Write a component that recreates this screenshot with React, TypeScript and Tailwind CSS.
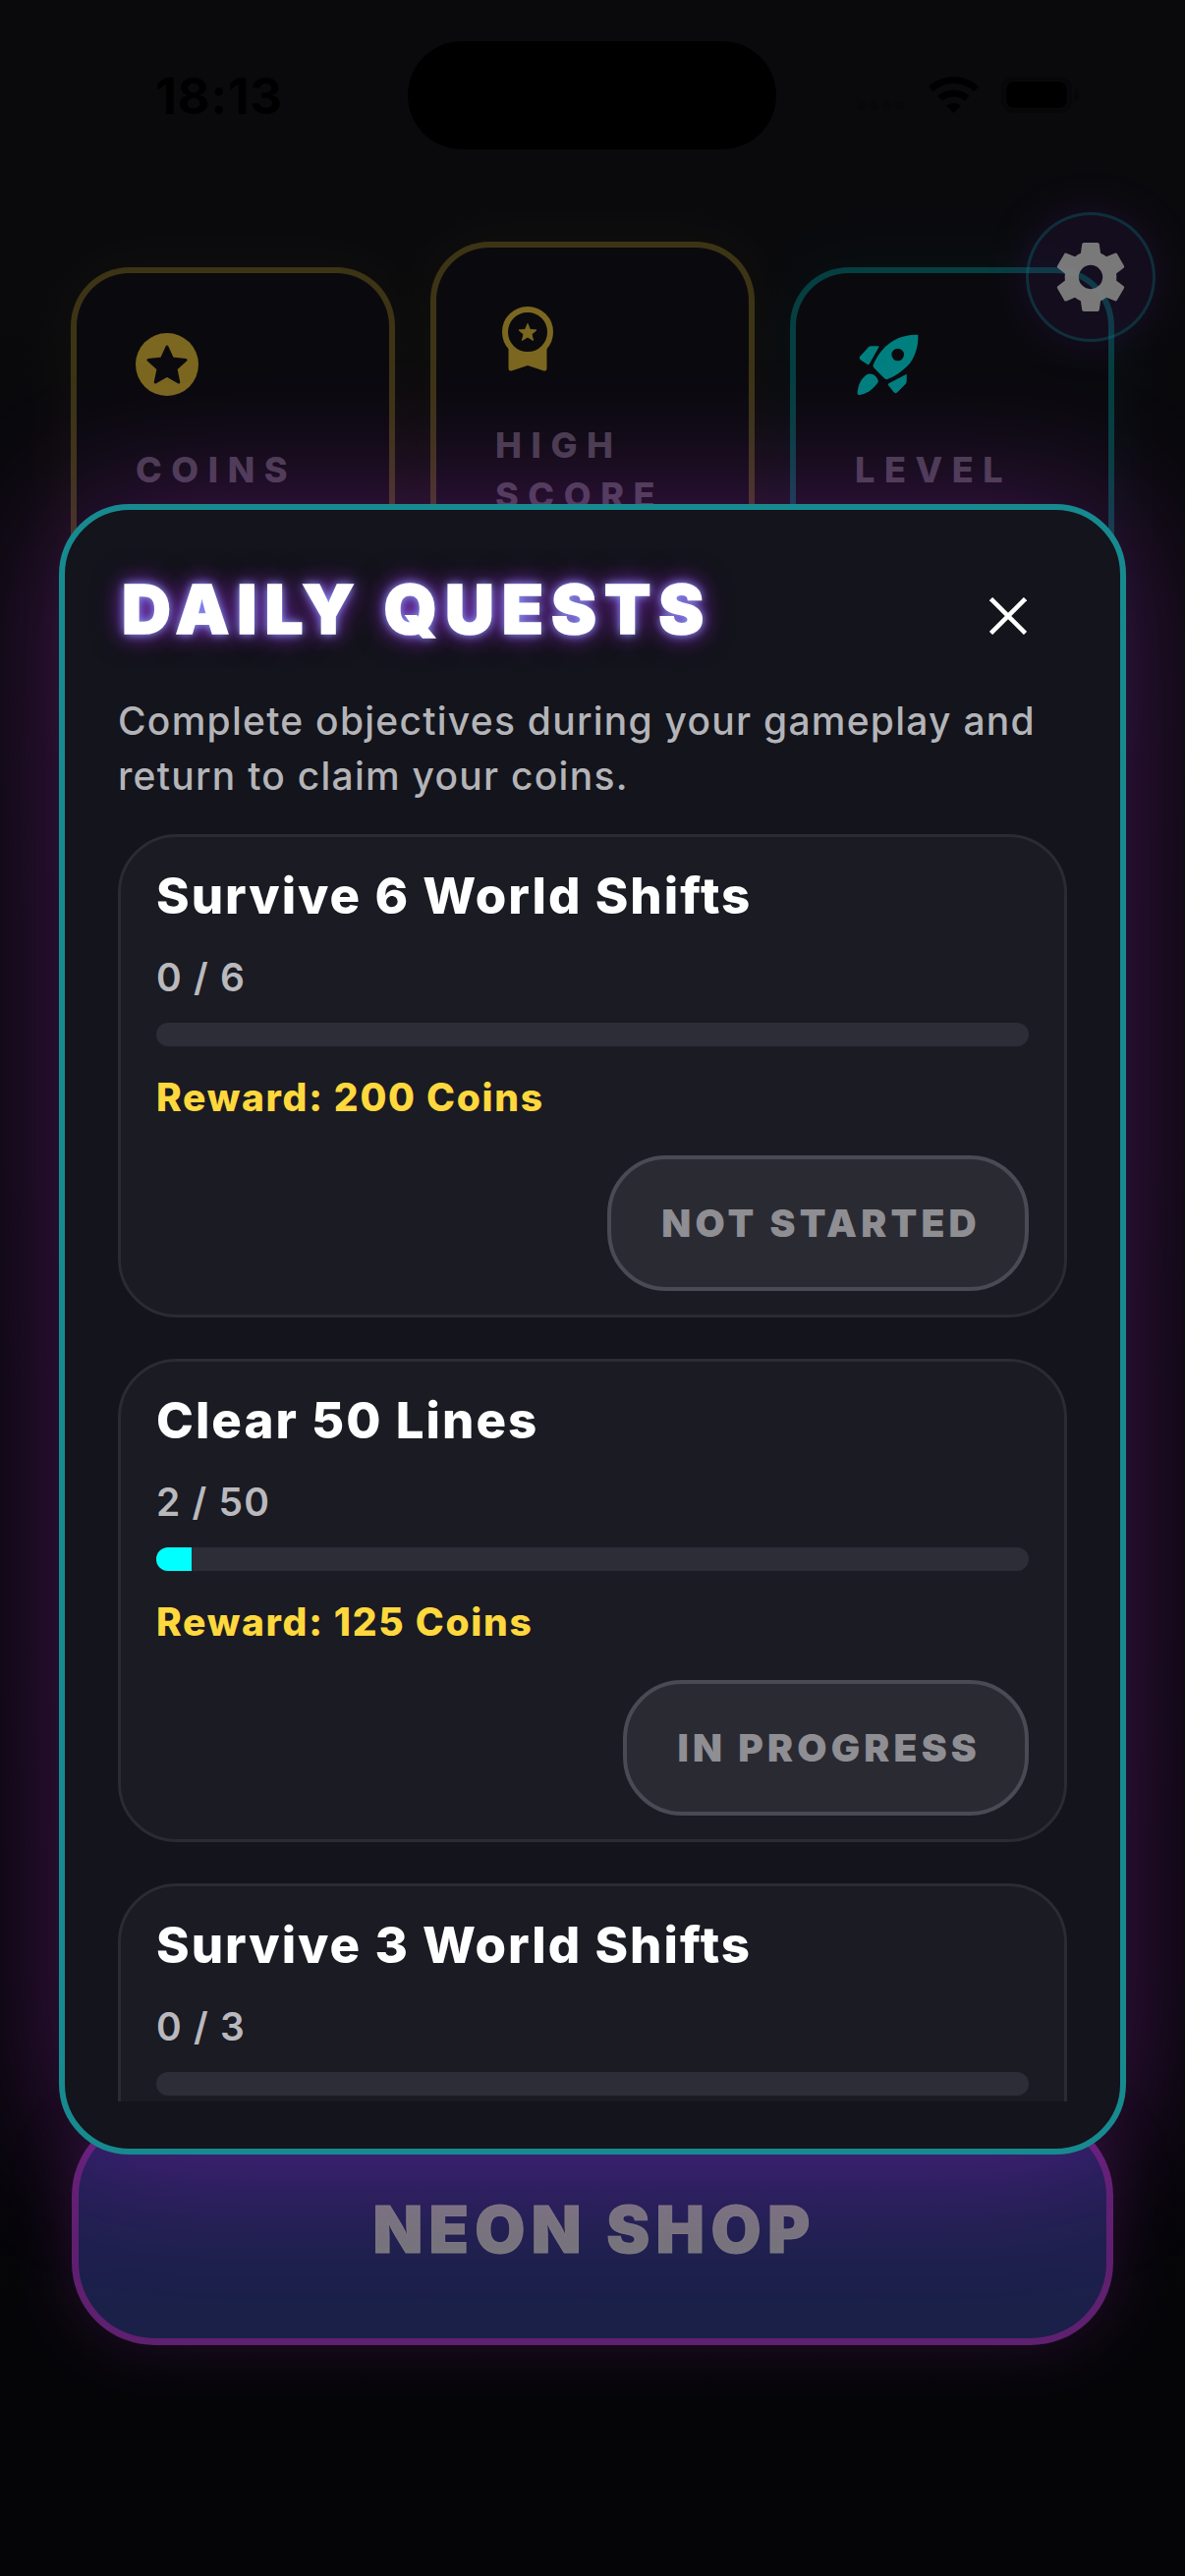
import { IoSettingsSharp } from 'react-icons/io5';

const sans = "font-['Inter','Noto_Sans',sans-serif]";

const quests = [
  { title: 'Survive 6 World Shifts', progress: '0 / 6', pct: 0, reward: 'Reward: 200 Coins', status: 'NOT STARTED' },
  { title: 'Clear 50 Lines', progress: '2 / 50', pct: 4, reward: 'Reward: 125 Coins', status: 'IN PROGRESS' },
  { title: 'Survive 3 World Shifts', progress: '0 / 3', pct: 0 },
];

const StatusBar = () => (
  <div className="flex items-start justify-between h-[152px] pt-[42px] pl-[158px] pr-[108px]">
    <span className="mt-[31px] text-[51px] leading-[50px] font-bold tracking-[0.500px] text-black">18:13</span>
    <div className="absolute left-[415px] top-[42px] w-[375px] h-[110px] rounded-[55px] bg-black" />
    <div className="flex items-center mt-[36px] gap-[23px]">
      <div className="flex gap-[4px] mt-[22px] mr-[2px]">
        <span className="w-[9px] h-[9px] rounded-full bg-[#101016]" />
        <span className="w-[9px] h-[9px] rounded-full bg-[#101016]" />
        <span className="w-[9px] h-[9px] rounded-full bg-[#101016]" />
        <span className="w-[9px] h-[9px] rounded-full bg-[#101016]" />
      </div>
      <svg width="51" height="37" viewBox="0 0 51 37" fill="black">
        <path d="M25.5 0C15.8 0 7 3.800 0 10l4.500 5.200C10.200 10.200 17.500 7 25.500 7s15.300 3.200 21 8.200L51 10C44 3.800 35.200 0 25.500 0z" />
        <path d="M25.500 13.500c-6.200 0-11.800 2.300-16.200 6.100l4.600 5.200c3.100-2.700 7.200-4.300 11.600-4.300s8.500 1.600 11.600 4.300l4.600-5.200c-4.400-3.800-10-6.100-16.200-6.100z" />
        <path d="M25.500 27c-2.900 0-5.500 1-7.500 2.800l7.500 7.200 7.500-7.200C31 28 28.400 27 25.500 27z" />
      </svg>
      <div className="flex items-center">
        <div className="w-[72px] h-[37px] rounded-[12px] border-[4px] border-[#0e0e12] p-[1px]">
          <div className="w-full h-full rounded-[8px] bg-black" />
        </div>
        <span className="w-[5px] h-[14px] rounded-r-full bg-[#0e0e12] ml-[2px]" />
      </div>
    </div>
  </div>
);

const StarCoin = () => (
  <svg width="64" height="64" viewBox="0 0 64 64">
    <circle cx="32" cy="32" r="32" fill="#f6ce3e" />
    <polygon
      points="32,14 37.500,26 51,27.500 41,36.500 43.800,50 32,43.200 20.200,50 23,36.500 13,27.500 26.500,26"
      fill="#14141c"
      stroke="#14141c"
      strokeWidth="3"
      strokeLinejoin="round"
    />
  </svg>
);

const Medal = () => (
  <svg width="52" height="66" viewBox="0 0 52 66" fill="#f6ce3e">
    <circle cx="26" cy="26" r="23" fill="none" stroke="#f6ce3e" strokeWidth="6" />
    <path d="M6.500 42V63Q6.500 66 9.500 65.500L26 60 42.500 65.500Q45.500 66 45.500 63V42A26 26 0 0 1 6.500 42Z" />
    <polygon
      points="26,17.500 28.500,23.500 35,24 30,28.200 31.600,34.500 26,31 20.400,34.500 22,28.200 17,24 23.500,23.500"
      stroke="#f6ce3e"
      strokeWidth="1"
      strokeLinejoin="round"
    />
  </svg>
);

const Rocket = () => (
  <svg width="65" height="66" viewBox="20 18 65 66" fill="#00ffff" fillRule="evenodd">
    <path d="M83.300 20.700C70 20 58 25 50 33 45 38 40 45 37.500 52 37.500 53 38 54 39 55L49 65C50 66 51 66.500 52 66 60 63 67 58 73 52 80 45 84 32 83.300 20.700ZM62.700 34.700A6.300 6.300 0 1 1 62.700 47.300 6.300 6.300 0 1 1 62.700 34.700Z" />
    <path d="M43.300 32.300H36Q34 32.300 33 33.300L24 43Q23 45 25 46.500L32 51Q33.500 51.500 34 50L43.300 33.500Z" />
    <path d="M71.700 60.700V68Q71.700 70 70.500 71L62 79.500Q60 81 58.500 79L53 72Q52.500 70.500 54 70Z" />
    <path d="M32 60.700Q38 60 41 64 44 68 42 70C36 78 30 81 24 82 21 82.500 21.700 79 21.700 79 22.500 72 25 65 32 60.700Z" />
  </svg>
);

const StatCard = ({ label, lines, border, glow, raised, children }: {
  label?: string;
  lines?: string[];
  border: string;
  glow: string;
  raised?: boolean;
  children: React.ReactNode;
}) => (
  <div className={`w-[330px] h-[520px] rounded-[60px] border-[6px] bg-[#14141c] flex flex-col items-start pl-[60px] ${border} ${glow} ${raised ? 'mt-0 pt-[60px]' : 'mt-[26px] pt-[61px]'}`}>
    <div className="h-[64px] flex items-center">{children}</div>
    <div className={`text-[36px] leading-[51px] font-extrabold tracking-[9.600px] text-[#8a7c96] ${raised ? 'mt-[52px]' : 'mt-[50px]'}`}>
      {lines ? lines.map((l) => <div key={l}>{l}</div>) : label}
    </div>
  </div>
);

type Quest = { title: string; progress: string; pct: number; reward?: string; status?: string };

const QuestCard = ({ title, progress, pct, reward, status }: Quest) => (
  <div className="shrink-0 h-[492px] rounded-[60px] border-[3px] border-[#2a2b33] bg-[#1a1b23] px-[36px] pt-[29px] flex flex-col">
    <h2 className="text-[51px] leading-[62px] font-extrabold tracking-[2px] text-white">{title}</h2>
    <p className="mt-[29px] text-[39px] leading-[46px] font-semibold tracking-[1.200px] text-[#b9b9bd]">{progress}</p>
    <div className="mt-[23px] shrink-0 h-[24px] rounded-[12px] bg-[#2c2d36] overflow-hidden">
      <div className="h-full bg-[#00ffff]" style={{ width: `${pct}%` }} />
    </div>
    {reward && <p className="mt-[29px] text-[39px] leading-[46px] font-extrabold tracking-[1.700px] text-[#ffd83d]">{reward}</p>}
    {status && (
      <div className="mt-[36px] flex justify-end">
        <div className="h-[138px] rounded-[60px] border-[4px] border-[#4a4a54] bg-[#2a2a33] pl-[51px] pr-[45px] flex items-center text-[39px] font-black tracking-[4.200px] text-[#8e8e93]">
          {status}
        </div>
      </div>
    )}
  </div>
);

const App = () => {
  return (
    <div className={`relative w-[1206px] h-[2622px] overflow-hidden bg-gradient-to-b from-[#15151b] to-[#0a0a10] ${sans}`}>
      {/* screen behind the modal */}
      <div className="flex flex-col h-full">
        <StatusBar />
        <div className="flex items-start gap-[36px] px-[72px] mt-[94px]">
          <StatCard label="COINS" border="border-[#f6ce3e]/45" glow="shadow-[0_0_60px_rgba(255,215,60,0.08)]">
            <StarCoin />
          </StatCard>
          <StatCard lines={['HIGH', 'SCORE']} border="border-[#f6ce3e]/45" glow="shadow-[0_0_60px_rgba(255,215,60,0.08)]" raised>
            <div className="ml-[7px] mt-[2px]">
              <Medal />
            </div>
          </StatCard>
          <StatCard label="LEVEL" border="border-[#00ffff]/45" glow="shadow-[0_0_60px_rgba(0,255,255,0.08)]">
            <div className="ml-[1px]">
              <Rocket />
            </div>
          </StatCard>
        </div>
        <div className="mt-auto mb-[235px] mx-[73px] h-[236px] rounded-[84px] border-[7px] border-[#be40e0] bg-gradient-to-b from-[#4438b4] via-[#3c409c] to-[#344090] shadow-[0_0_60px_rgba(190,64,224,0.35)] flex items-center justify-center">
          <span className="ml-[4px] text-[66px] font-black tracking-[6.300px] text-white/90 [-webkit-text-stroke:1px_rgba(255,255,255,0.9)]">NEON SHOP</span>
        </div>
      </div>

      <div className="absolute left-[1044px] top-[216px] w-[132px] h-[132px] rounded-full border-[3px] border-[#00ffff]/30 bg-[#a03cff]/15 shadow-[0_0_40px_rgba(160,60,255,0.25)] flex items-center justify-center text-white/95">
        <IoSettingsSharp size={78} />
      </div>

      {/* dim */}
      <div className="absolute inset-0 bg-black/50" />

      {/* modal */}
      <div className="absolute left-[60px] top-[513px] w-[1086px] h-[1680px] rounded-[72px] border-[6px] border-[#178a8f] bg-[#13141c] shadow-[0_0_140px_rgba(190,50,230,0.33)] px-[54px] pt-[54px] pb-[48px] flex flex-col">
        <div className="flex items-start justify-between">
          <h1 className="mt-[7px] ml-[4px] text-[69px] leading-[80px] font-black tracking-[8px] text-white [-webkit-text-stroke:1.500px_white] [text-shadow:0_0_10px_#8fb0ff,0_0_20px_#8040e0,0_0_32px_rgba(160,0,160,0.5)]">DAILY QUESTS</h1>
          <svg className="mt-[35px] mr-[41px]" width="38" height="38" viewBox="0 0 38 38" stroke="white" strokeWidth="4.500">
            <line x1="1.500" y1="1.500" x2="36.500" y2="36.500" />
            <line x1="36.500" y1="1.500" x2="1.500" y2="36.500" />
          </svg>
        </div>
        <p className="mt-[46px] text-[39px] leading-[56px] font-[450] tracking-[1.250px] text-[#b4b4b8]">
          Complete objectives during your gameplay and
          <br />
          return to claim your coins.
        </p>
        <div className="mt-[31px] flex-1 min-h-0 overflow-hidden flex flex-col gap-[42px]">
          {quests.map((q) => (
            <QuestCard key={q.title} {...q} />
          ))}
        </div>
      </div>
    </div>
  );
};

export default App;
